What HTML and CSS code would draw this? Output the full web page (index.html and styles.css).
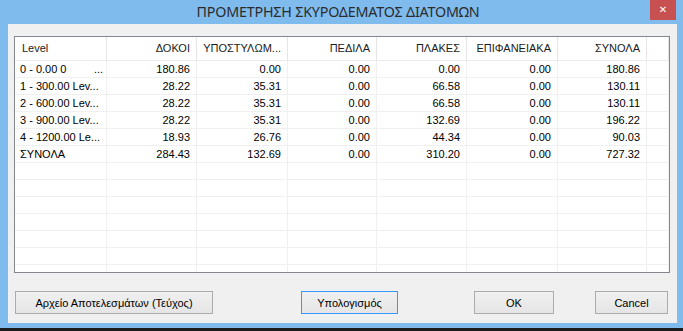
FILE: index.html
```html
<!DOCTYPE html>
<html>
	<head>
		<meta charset="UTF-8">
		<title>ΠΡΟΜΕΤΡΗΣΗ ΣΚΥΡΟΔΕΜΑΤΟΣ ΔΙΑΤΟΜΩΝ</title>
		<link rel="stylesheet" href="styles.css">
	</head>
	<body>
		<div class="window">
			<div class="titlebar">
				<span></span>
				<span class="title">ΠΡΟΜΕΤΡΗΣΗ ΣΚΥΡΟΔΕΜΑΤΟΣ ΔΙΑΤΟΜΩΝ</span>
				<span class="close">✕</span>
			</div>
			<div class="client">
				<div class="listview">
					<div class="row head">
						<div class="cell left">Level</div>
						<div class="cell">ΔΟΚΟΙ</div>
						<div class="cell">ΥΠΟΣΤΥΛΩΜ...</div>
						<div class="cell">ΠΕΔΙΛΑ</div>
						<div class="cell">ΠΛΑΚΕΣ</div>
						<div class="cell">ΕΠΙΦΑΝΕΙΑΚΑ</div>
						<div class="cell">ΣΥΝΟΛΑ</div>
						<div class="cell"></div>
					</div>
					<div class="row">
						<div class="cell left">0 - 0.00 0         ...</div>
						<div class="cell">180.86</div>
						<div class="cell">0.00</div>
						<div class="cell">0.00</div>
						<div class="cell">0.00</div>
						<div class="cell">0.00</div>
						<div class="cell">180.86</div>
						<div class="cell"></div>
					</div>
					<div class="row">
						<div class="cell left">1 - 300.00 Lev...</div>
						<div class="cell">28.22</div>
						<div class="cell">35.31</div>
						<div class="cell">0.00</div>
						<div class="cell">66.58</div>
						<div class="cell">0.00</div>
						<div class="cell">130.11</div>
						<div class="cell"></div>
					</div>
					<div class="row">
						<div class="cell left">2 - 600.00 Lev...</div>
						<div class="cell">28.22</div>
						<div class="cell">35.31</div>
						<div class="cell">0.00</div>
						<div class="cell">66.58</div>
						<div class="cell">0.00</div>
						<div class="cell">130.11</div>
						<div class="cell"></div>
					</div>
					<div class="row">
						<div class="cell left">3 - 900.00 Lev...</div>
						<div class="cell">28.22</div>
						<div class="cell">35.31</div>
						<div class="cell">0.00</div>
						<div class="cell">132.69</div>
						<div class="cell">0.00</div>
						<div class="cell">196.22</div>
						<div class="cell"></div>
					</div>
					<div class="row">
						<div class="cell left">4 - 1200.00 Le...</div>
						<div class="cell">18.93</div>
						<div class="cell">26.76</div>
						<div class="cell">0.00</div>
						<div class="cell">44.34</div>
						<div class="cell">0.00</div>
						<div class="cell">90.03</div>
						<div class="cell"></div>
					</div>
					<div class="row">
						<div class="cell left">ΣΥΝΟΛΑ</div>
						<div class="cell">284.43</div>
						<div class="cell">132.69</div>
						<div class="cell">0.00</div>
						<div class="cell">310.20</div>
						<div class="cell">0.00</div>
						<div class="cell">727.32</div>
						<div class="cell"></div>
					</div>
					<!-- κενές γραμμές -->
					<div class="row"><div class="cell"></div><div class="cell"></div><div class="cell"></div><div class="cell"></div><div class="cell"></div><div class="cell"></div><div class="cell"></div><div class="cell"></div></div>
					<div class="row"><div class="cell"></div><div class="cell"></div><div class="cell"></div><div class="cell"></div><div class="cell"></div><div class="cell"></div><div class="cell"></div><div class="cell"></div></div>
					<div class="row"><div class="cell"></div><div class="cell"></div><div class="cell"></div><div class="cell"></div><div class="cell"></div><div class="cell"></div><div class="cell"></div><div class="cell"></div></div>
					<div class="row"><div class="cell"></div><div class="cell"></div><div class="cell"></div><div class="cell"></div><div class="cell"></div><div class="cell"></div><div class="cell"></div><div class="cell"></div></div>
					<div class="row"><div class="cell"></div><div class="cell"></div><div class="cell"></div><div class="cell"></div><div class="cell"></div><div class="cell"></div><div class="cell"></div><div class="cell"></div></div>
					<div class="row"><div class="cell"></div><div class="cell"></div><div class="cell"></div><div class="cell"></div><div class="cell"></div><div class="cell"></div><div class="cell"></div><div class="cell"></div></div>
					<div class="row"><div class="cell"></div><div class="cell"></div><div class="cell"></div><div class="cell"></div><div class="cell"></div><div class="cell"></div><div class="cell"></div><div class="cell"></div></div>
				</div>
				<div class="buttons">
					<button class="btn b-file">Αρχείο Αποτελεσμάτων (Τεύχος)</button>
					<button class="btn b-calc focus">Υπολογισμός</button>
					<button class="btn b-ok">OK</button>
					<button class="btn b-cancel">Cancel</button>
				</div>
			</div>
		</div>
	</body>
</html>
```

FILE: styles.css
```css
html,
body {
	margin: 0;
	height: 331px;
	background-color: #1c1c1c;
	overflow: hidden;
}

.window {
	width: 683px;
	height: 328px;
	box-sizing: border-box;
	padding: 0 6px 5px 8px;
	background-color: #80bbee;
	display: flex;
	flex-direction: column;
}

.titlebar {
	height: 24px;
	margin: 0 -6px 0 -8px;
	padding-right: 7px;
	display: grid;
	grid-template-columns: 1fr auto 1fr;
	align-items: start;
}

.title {
	font-family: "Noto Sans", "Open Sans", sans-serif;
	font-size: 14.3px;
	line-height: 24px;
	color: #2b2b2b;
	letter-spacing: -0.2px;
}

.close {
	justify-self: end;
	width: 26px;
	height: 20px;
	background-color: #c75050;
	color: white;
	font-family: "DejaVu Sans", sans-serif;
	font-size: 10px;
	font-weight: bold;
	line-height: 20px;
	text-align: center;
}

.client {
	flex: 1;
	background-color: #f0f0f0;
	padding: 12px 7px 0 6px;
	font-family: "Liberation Sans", Arial, sans-serif;
	font-size: 11px;
	color: #000;
}

.listview {
	height: 237px;
	box-sizing: border-box;
	border: 1px solid #828790;
	background-color: white;
	overflow: hidden;
}

.row {
	display: grid;
	grid-template-columns: 92px 90px 91px 89px 90px 91px 89px 1fr;
	height: 17px;
	box-sizing: border-box;
	border-bottom: 1px solid #f0f0f0;
}

.row.head {
	height: 24px;
	border-bottom: 1px solid #ececec;
}

.cell {
	box-sizing: border-box;
	border-right: 1px solid #f0f0f0;
	padding: 0 6px 0 6px;
	line-height: 16px;
	text-align: right;
	white-space: pre;
}

.head .cell {
	line-height: 23px;
	border-right-color: #e5e5e5;
	color: #1a1a1a;
}

.cell.left {
	text-align: left;
	padding-left: 5px;
	padding-right: 0;
}

.head .cell.left {
	padding-left: 7px;
}

.buttons {
	display: flex;
	margin-top: 18px;
}

.btn {
	height: 23px;
	font-family: "Liberation Sans", Arial, sans-serif;
	font-size: 11px;
	color: #000;
	background: linear-gradient(#f0f0f0, #e5e5e5);
	border: 1px solid #acacac;
	padding: 0;
}

.b-file {
	width: 198px;
	margin-left: 1px;
}

.b-calc {
	width: 97px;
	margin-left: 88px;
}

.b-ok {
	width: 80px;
	margin-left: 76px;
}

.b-cancel {
	width: 73px;
	margin-left: 41px;
}

.btn.focus {
	border-color: #3399ff;
}
```
